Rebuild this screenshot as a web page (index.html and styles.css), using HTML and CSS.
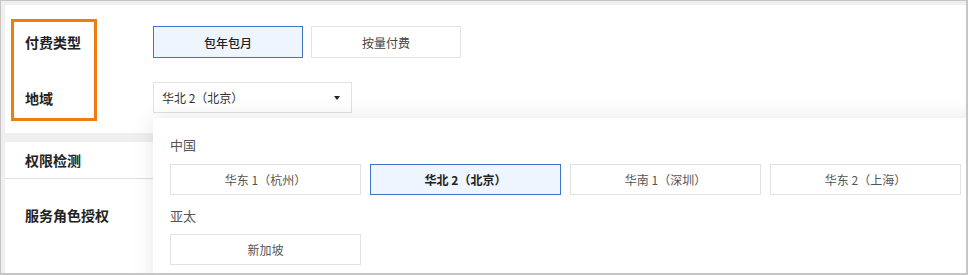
FILE: index.html
```html
<!DOCTYPE html>
<html lang="zh-CN">
<head>
<meta charset="utf-8">
<link rel="stylesheet" href="styles.css">
</head>
<body>
<div class="frame">
  <section class="card card-top">
    <div class="row row-pay">
      <div class="label">付费类型</div>
      <div class="options">
        <button class="opt opt-active">包年包月</button>
        <button class="opt">按量付费</button>
      </div>
    </div>
    <div class="row row-region">
      <div class="label">地域</div>
      <div class="select">
        <span>华北 2（北京）</span>
        <i class="caret"></i>
      </div>
    </div>
  </section>
  <section class="card card-bottom">
    <div class="row row-check">
      <div class="label">权限检测</div>
    </div>
    <div class="row row-role">
      <div class="label">服务角色授权</div>
      <span class="status-dot"></span>
    </div>
  </section>

  <div class="highlight"></div>

  <div class="popup">
    <div class="group-title">中国</div>
    <div class="grid">
      <button class="region">华东 1（杭州）</button>
      <button class="region region-active">华北 2（北京）</button>
      <button class="region">华南 1（深圳）</button>
      <button class="region">华东 2（上海）</button>
    </div>
    <div class="group-title group-title-2">亚太</div>
    <div class="grid">
      <button class="region">新加坡</button>
    </div>
  </div>
</div>
</body>
</html>
```
FILE: styles.css
```css
* { box-sizing: border-box; }
html, body { margin: 0; padding: 0; background: #fff; }
body {
  font-family: "Noto Sans CJK SC", "Noto Sans", "Liberation Sans", sans-serif;
  color: #333;
}
.frame {
  position: relative;
  width: 968px;
  height: 275px;
  border: 1px solid #c6c6c6;
  border-right-width: 2px;
  border-bottom-width: 2px;
  background: #efefef;
  padding: 4px 0 0 4px;
  overflow: hidden;
  display: flex;
  flex-direction: column;
  gap: 9px;
}
.card {
  background: #fff;
  flex: none;
}
.card-top {
  height: 128px;
  padding: 21px 0 0 20px;
}
.card-bottom {
  flex: 1;
}
.row {
  display: flex;
  align-items: center;
}
.label {
  width: 128px;
  flex: none;
  font-size: 14px;
  font-weight: 700;
  color: #222;
  line-height: 20px;
}
.row-pay { height: 32px; margin-bottom: 24px; }
.row-region { height: 31px; }
.options { display: flex; gap: 8px; }
.opt {
  width: 150px;
  height: 32px;
  border: 1px solid #e2e2e2;
  background: #fff;
  font-family: inherit;
  font-size: 12px;
  color: #444;
  padding: 0;
}
.opt-active {
  border-color: #3d74c6;
  background: #eff5ff;
  color: #222;
  font-weight: 500;
}
.select {
  width: 199px;
  height: 31px;
  border: 1px solid #e2e2e2;
  display: flex;
  align-items: center;
  justify-content: space-between;
  padding: 0 11px 0 8px;
  font-size: 12px;
  color: #333;
}
.caret {
  width: 0;
  height: 0;
  border-left: 3.5px solid transparent;
  border-right: 3.5px solid transparent;
  border-top: 4px solid #222;
}
.card-bottom .row { padding-left: 20px; }
.row-check {
  height: 37px;
  border-bottom: 1px solid #dedede;
}
.row-role {
  height: 72px;
}
.status-dot {
  width: 8px;
  height: 8px;
  border-radius: 50%;
  background: #f0b400;
  margin-left: 0;
}
.highlight {
  position: absolute;
  left: 10px;
  top: 18px;
  width: 86px;
  height: 102px;
  border: 3px solid #f27c12;
}
.popup {
  position: absolute;
  left: 152px;
  top: 117px;
  width: 840px;
  height: 200px;
  background: #fff;
  border-radius: 4px 0 0 0;
  box-shadow: 0 0 22px rgba(0, 0, 0, 0.10);
  padding: 17px 0 0 17px;
}
.group-title {
  font-size: 13px;
  line-height: 20px;
  color: #555;
  margin-bottom: 9px;
}
.group-title-2 { margin-top: 11px; margin-bottom: 8px; }
.grid {
  display: grid;
  grid-template-columns: repeat(4, 191px);
  column-gap: 9px;
}
.region {
  height: 31px;
  border: 1px solid #e2e2e2;
  background: #fff;
  font-family: inherit;
  font-size: 12px;
  color: #555;
  padding: 0;
}
.region-active {
  border-color: #3d74c6;
  background: #eff5ff;
  color: #222;
  font-weight: 700;
}
```
